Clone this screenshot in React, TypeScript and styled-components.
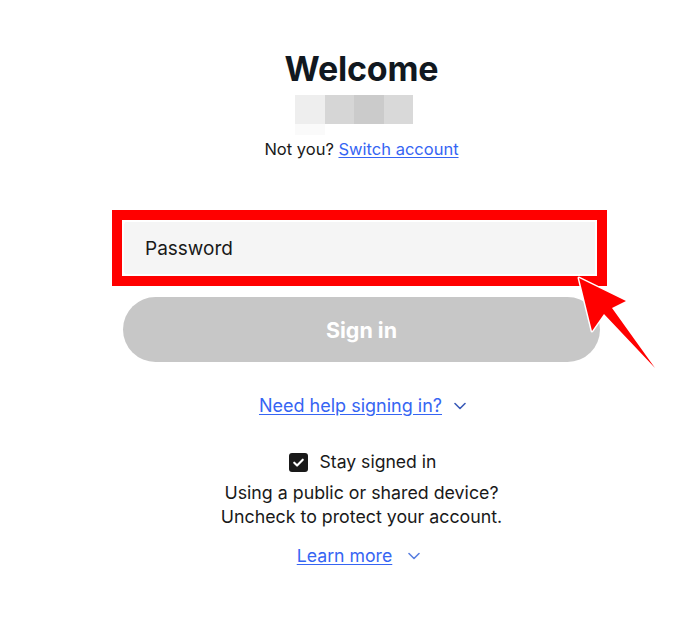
import { createGlobalStyle } from "styled-components";
import styled from "styled-components";

const GlobalStyle = createGlobalStyle`
  html, body {
    margin: 0;
    padding: 0;
    background: #ffffff;
  }
  body {
    font-family: Inter, "Liberation Sans", sans-serif;
    color: #191919;
  }
`;

const App = () => {
  return (
    <Page>
      <GlobalStyle />
      <Panel>
        <Title>Welcome</Title>
        <Redacted>
          <Pixel $shade="#eeeeee" />
          <Pixel $shade="#d6d6d6" />
          <Pixel $shade="#cbcbcb" />
          <Pixel $shade="#d9d9d9" />
          <PixelTail />
        </Redacted>
        <NotYou>
          Not you? <TextLink href="#">Switch account</TextLink>
        </NotYou>

        <Field>
          <PasswordInput type="password" placeholder="Password" />
          <Highlight />
          <Pointer viewBox="0 0 110 120" width="110" height="120">
            <polygon
              points="19,19 66,42 52,49 95,109 44,55 32,72"
              fill="#ff0000"
              stroke="#ffffff"
              strokeWidth="3"
              strokeLinejoin="round"
              paintOrder="stroke"
            />
          </Pointer>
        </Field>

        <SignIn disabled>Sign in</SignIn>

        <HelpRow>
          <TextLink href="#">Need help signing in?</TextLink>
          <Chevron />
        </HelpRow>

        <StayRow>
          <Check>
            <svg viewBox="0 0 20 20" width="19" height="19">
              <path
                d="M5.5 10.2l3 3 6-6.2"
                fill="none"
                stroke="#ffffff"
                strokeWidth="2.2"
                strokeLinecap="round"
                strokeLinejoin="round"
              />
            </svg>
          </Check>
          <span>Stay signed in</span>
        </StayRow>
        <Notice>
          Using a public or shared device?
          <br />
          Uncheck to protect your account.
        </Notice>

        <LearnRow>
          <TextLink href="#">Learn more</TextLink>
          <Chevron $light />
        </LearnRow>
      </Panel>
    </Page>
  );
};

const Chevron = ({ $light }: { $light?: boolean }) => (
  <ChevronSvg viewBox="0 0 12 8" width="12" height="8" $light={$light}>
    <path d="M1 1.5l5 5 5-5" fill="none" strokeWidth="1.6" strokeLinecap="round" strokeLinejoin="round" />
  </ChevronSvg>
);

export default App;

const Page = styled.div`
  width: 697px;
  height: 629px;
  overflow: hidden;
  background: #ffffff;
`;

const Panel = styled.div`
  width: 477px;
  margin-left: 123px;
  padding-top: 48px;
  display: flex;
  flex-direction: column;
  align-items: center;
`;

const Title = styled.h1`
  margin: 0;
  font-size: 34px;
  line-height: 42px;
  font-weight: 700;
  color: #111820;
  letter-spacing: -0.2px;
`;

const Redacted = styled.div`
  margin-top: 5px;
  margin-right: 15px;
  width: 118px;
  display: grid;
  grid-template-columns: repeat(4, 1fr);
  grid-template-rows: 29px 11px;
`;

const Pixel = styled.div<{ $shade: string }>`
  background: ${(p) => p.$shade};
`;

const PixelTail = styled.div`
  background: #fafafa;
`;

const NotYou = styled.div`
  margin-top: 4px;
  font-size: 16.5px;
  line-height: 20px;
  color: #191919;
`;

const TextLink = styled.a`
  color: #3665f3;
  text-decoration: underline;
  text-underline-offset: 2px;
`;

const Field = styled.div`
  position: relative;
  margin-top: 61px;
  width: 100%;
  height: 56px;
`;

const PasswordInput = styled.input`
  box-sizing: border-box;
  width: 100%;
  height: 100%;
  border: none;
  border-radius: 8px;
  background: #f5f5f5;
  padding: 0 22px;
  font-family: Inter, "Liberation Sans", sans-serif;
  font-size: 19px;
  outline: none;
  &::placeholder {
    color: #191919;
  }
`;

const Highlight = styled.div`
  position: absolute;
  left: -11px;
  right: -7px;
  top: -10px;
  bottom: -10px;
  border: 10px solid #ff0000;
  box-shadow: inset 0 0 0 2px #ffffff;
  pointer-events: none;
`;

const Pointer = styled.svg`
  position: absolute;
  left: 437px;
  top: 39px;
  z-index: 2;
  overflow: visible;
`;

const SignIn = styled.button`
  margin-top: 21px;
  width: 100%;
  height: 65px;
  border: none;
  border-radius: 33px;
  background: #c7c7c7;
  color: #ffffff;
  font-family: Inter, "Liberation Sans", sans-serif;
  font-size: 21.5px;
  font-weight: 700;
`;

const HelpRow = styled.div`
  margin-top: 33px;
  display: flex;
  align-items: center;
  gap: 12px;
  font-size: 18px;
  line-height: 22px;
  padding-left: 2px;
`;

const ChevronSvg = styled.svg<{ $light?: boolean }>`
  stroke: ${(p) => (p.$light ? "#5a7fe0" : "#3a5bb8")};
`;

const StayRow = styled.div`
  margin-top: 34px;
  display: flex;
  align-items: center;
  gap: 12px;
  font-size: 17.6px;
  line-height: 22px;
  color: #191919;
  padding-left: 2px;
`;

const Check = styled.span`
  width: 19px;
  height: 19px;
  border-radius: 3px;
  background: #191919;
  display: flex;
`;

const Notice = styled.p`
  margin: 8px 0 0;
  font-size: 17.8px;
  line-height: 24px;
  text-align: center;
  color: #191919;
`;

const LearnRow = styled.div`
  margin-top: 16px;
  display: flex;
  align-items: center;
  gap: 16px;
  font-size: 17.7px;
  line-height: 22px;
  padding-right: 6px;
`;
